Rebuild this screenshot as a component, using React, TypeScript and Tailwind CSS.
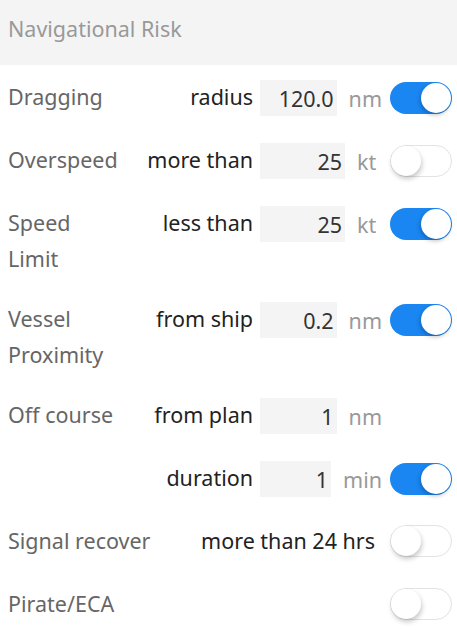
import type { ReactNode } from 'react'

function Toggle({ on }: { on: boolean }) {
  return (
    <div
      className={
        on
          ? 'relative h-[32px] w-[62px] shrink-0 rounded-full bg-[#1a86f2]'
          : 'relative h-[32px] w-[62px] shrink-0 rounded-full border border-[#e3e3e3] bg-white'
      }
    >
      <span
        className={
          on
            ? 'absolute right-[1px] top-[1px] h-[30px] w-[30px] rounded-full bg-white shadow-[-1px_2px_4px_rgba(0,0,0,0.25)]'
            : 'absolute left-[0px] top-[0px] h-[30px] w-[30px] rounded-full bg-white shadow-[1px_3px_5px_rgba(0,0,0,0.22)]'
        }
      />
    </div>
  )
}

function Field({ value, unit }: { value: string; unit: string }) {
  return (
    <div className="mt-[3px] flex h-[36px] w-[130px] shrink-0 leading-[38px]">
      <div className="flex-1 bg-[#f4f4f4] pr-[3px] text-right text-[#333]">{value}</div>
      <div className="min-w-[45px] pl-3 pr-2 text-[#999]">{unit}</div>
    </div>
  )
}

function Row({
  label,
  sub,
  value,
  unit,
  on,
}: {
  label?: string
  sub: string
  value: string
  unit: string
  on?: boolean
}) {
  return (
    <div className="flex items-start py-3 pl-2 pr-[5px]">
      <div className="mb-[-2px] w-[108px] shrink-0 pt-[2px] text-[#666]">{label}</div>
      <div className="mb-[-2px] flex-1 pr-[7px] pt-[2px] text-right text-[#222]">{sub}</div>
      <Field value={value} unit={unit} />
      <div className="mt-[5px] w-[62px] shrink-0">{on !== undefined && <Toggle on={on} />}</div>
    </div>
  )
}

function PlainRow({ label, children, on }: { label: string; children?: ReactNode; on: boolean }) {
  return (
    <div className="flex min-h-[63px] items-center py-3 pl-2 pr-[5px]">
      <div className="flex-1 text-[#666]">{label}</div>
      {children && <div className="pr-[15px] text-[#222]">{children}</div>}
      <Toggle on={on} />
    </div>
  )
}

export default function App() {
  return (
    <div className="h-[630px] w-[457px] overflow-hidden bg-white text-[21.5px] leading-[36px] [font-family:'Noto_Sans',sans-serif]">
      <div className="h-[65px] bg-[#f4f4f4] pl-2 pt-[11px] text-[#999]">Navigational Risk</div>
      <Row label="Dragging" sub="radius" value="120.0" unit="nm" on />
      <Row label="Overspeed" sub="more than" value="25" unit="kt" on={false} />
      <Row label="Speed Limit" sub="less than" value="25" unit="kt" on />
      <Row label="Vessel Proximity" sub="from ship" value="0.2" unit="nm" on />
      <Row label="Off course" sub="from plan" value="1" unit="nm" />
      <Row sub="duration" value="1" unit="min" on />
      <PlainRow label="Signal recover" on={false}>
        more than 24 hrs
      </PlainRow>
      <PlainRow label="Pirate/ECA" on={false} />
    </div>
  )
}
